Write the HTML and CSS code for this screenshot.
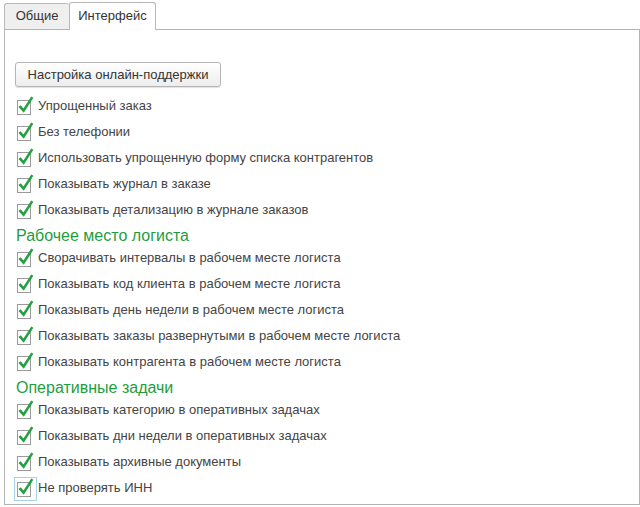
FILE: index.html
```html
<!DOCTYPE html>
<html lang="ru">
<head>
<meta charset="utf-8">
<link rel="stylesheet" href="styles.css">
</head>
<body>
<div class="tabs">
  <div class="tab inactive">Общие</div>
  <div class="tab active">Интерфейс</div>
</div>
<div class="panel">
  <button class="btn">Настройка онлайн-поддержки</button>
  <div class="list">
    <div class="row"><span class="cb"><svg width="18" height="20" viewBox="0 0 18 20"><rect x="1.5" y="4.5" width="13" height="14" fill="#fff" stroke="#9a9a9a"/><path d="M4.3 11 L7.6 14.6 L15.6 2.2" fill="none" stroke="#24a142" stroke-width="2.6" stroke-linecap="square"/></svg></span>Упрощенный заказ</div>
    <div class="row"><span class="cb"><svg width="18" height="20" viewBox="0 0 18 20"><rect x="1.5" y="4.5" width="13" height="14" fill="#fff" stroke="#9a9a9a"/><path d="M4.3 11 L7.6 14.6 L15.6 2.2" fill="none" stroke="#24a142" stroke-width="2.6" stroke-linecap="square"/></svg></span>Без телефонии</div>
    <div class="row"><span class="cb"><svg width="18" height="20" viewBox="0 0 18 20"><rect x="1.5" y="4.5" width="13" height="14" fill="#fff" stroke="#9a9a9a"/><path d="M4.3 11 L7.6 14.6 L15.6 2.2" fill="none" stroke="#24a142" stroke-width="2.6" stroke-linecap="square"/></svg></span>Использовать упрощенную форму списка контрагентов</div>
    <div class="row"><span class="cb"><svg width="18" height="20" viewBox="0 0 18 20"><rect x="1.5" y="4.5" width="13" height="14" fill="#fff" stroke="#9a9a9a"/><path d="M4.3 11 L7.6 14.6 L15.6 2.2" fill="none" stroke="#24a142" stroke-width="2.6" stroke-linecap="square"/></svg></span>Показывать журнал в заказе</div>
    <div class="row"><span class="cb"><svg width="18" height="20" viewBox="0 0 18 20"><rect x="1.5" y="4.5" width="13" height="14" fill="#fff" stroke="#9a9a9a"/><path d="M4.3 11 L7.6 14.6 L15.6 2.2" fill="none" stroke="#24a142" stroke-width="2.6" stroke-linecap="square"/></svg></span>Показывать детализацию в журнале заказов</div>
    <div class="group">Рабочее место логиста</div>
    <div class="row"><span class="cb"><svg width="18" height="20" viewBox="0 0 18 20"><rect x="1.5" y="4.5" width="13" height="14" fill="#fff" stroke="#9a9a9a"/><path d="M4.3 11 L7.6 14.6 L15.6 2.2" fill="none" stroke="#24a142" stroke-width="2.6" stroke-linecap="square"/></svg></span>Сворачивать интервалы в рабочем месте логиста</div>
    <div class="row"><span class="cb"><svg width="18" height="20" viewBox="0 0 18 20"><rect x="1.5" y="4.5" width="13" height="14" fill="#fff" stroke="#9a9a9a"/><path d="M4.3 11 L7.6 14.6 L15.6 2.2" fill="none" stroke="#24a142" stroke-width="2.6" stroke-linecap="square"/></svg></span>Показывать код клиента в рабочем месте логиста</div>
    <div class="row"><span class="cb"><svg width="18" height="20" viewBox="0 0 18 20"><rect x="1.5" y="4.5" width="13" height="14" fill="#fff" stroke="#9a9a9a"/><path d="M4.3 11 L7.6 14.6 L15.6 2.2" fill="none" stroke="#24a142" stroke-width="2.6" stroke-linecap="square"/></svg></span>Показывать день недели в рабочем месте логиста</div>
    <div class="row"><span class="cb"><svg width="18" height="20" viewBox="0 0 18 20"><rect x="1.5" y="4.5" width="13" height="14" fill="#fff" stroke="#9a9a9a"/><path d="M4.3 11 L7.6 14.6 L15.6 2.2" fill="none" stroke="#24a142" stroke-width="2.6" stroke-linecap="square"/></svg></span>Показывать заказы развернутыми в рабочем месте логиста</div>
    <div class="row"><span class="cb"><svg width="18" height="20" viewBox="0 0 18 20"><rect x="1.5" y="4.5" width="13" height="14" fill="#fff" stroke="#9a9a9a"/><path d="M4.3 11 L7.6 14.6 L15.6 2.2" fill="none" stroke="#24a142" stroke-width="2.6" stroke-linecap="square"/></svg></span>Показывать контрагента в рабочем месте логиста</div>
    <div class="group">Оперативные задачи</div>
    <div class="row"><span class="cb"><svg width="18" height="20" viewBox="0 0 18 20"><rect x="1.5" y="4.5" width="13" height="14" fill="#fff" stroke="#9a9a9a"/><path d="M4.3 11 L7.6 14.6 L15.6 2.2" fill="none" stroke="#24a142" stroke-width="2.6" stroke-linecap="square"/></svg></span>Показывать категорию в оперативных задачах</div>
    <div class="row"><span class="cb"><svg width="18" height="20" viewBox="0 0 18 20"><rect x="1.5" y="4.5" width="13" height="14" fill="#fff" stroke="#9a9a9a"/><path d="M4.3 11 L7.6 14.6 L15.6 2.2" fill="none" stroke="#24a142" stroke-width="2.6" stroke-linecap="square"/></svg></span>Показывать дни недели в оперативных задачах</div>
    <div class="row"><span class="cb"><svg width="18" height="20" viewBox="0 0 18 20"><rect x="1.5" y="4.5" width="13" height="14" fill="#fff" stroke="#9a9a9a"/><path d="M4.3 11 L7.6 14.6 L15.6 2.2" fill="none" stroke="#24a142" stroke-width="2.6" stroke-linecap="square"/></svg></span>Показывать архивные документы</div>
    <div class="row"><span class="cb focus"><svg width="18" height="20" viewBox="0 0 18 20"><rect x="1.5" y="4.5" width="13" height="14" fill="#fff" stroke="#9a9a9a"/><path d="M4.3 11 L7.6 14.6 L15.6 2.2" fill="none" stroke="#24a142" stroke-width="2.6" stroke-linecap="square"/></svg></span>Не проверять ИНН</div>
  </div>
</div>
</body>
</html>
```

FILE: styles.css
```css
* { box-sizing: border-box; }
html, body { margin: 0; padding: 0; background: #fff; }
body {
  font-family: "Liberation Sans", Arial, sans-serif;
  font-size: 13px;
  color: #444;
}
.tabs {
  display: flex;
  align-items: flex-end;
  height: 29px;
  padding-left: 4px;
  position: relative;
  z-index: 2;
}
.tab {
  border: 1px solid #b8b8b8;
  border-bottom: none;
  border-radius: 3px 3px 0 0;
  color: #333;
  text-align: center;
}
.tab.inactive {
  width: 65px;
  height: 26px;
  line-height: 24px;
  background: #efefef;
  border-right: none;
}
.tab.active {
  width: 87px;
  height: 28px;
  line-height: 25px;
  background: #fff;
  margin-bottom: -1px;
}
.panel {
  margin-left: 4px;
  width: 636px;
  height: 476px;
  border: 1px solid #b4b4b4;
  padding: 32px 10px 4px 10px;
  position: relative;
  z-index: 1;
}
.btn {
  display: block;
  width: 206px;
  height: 25px;
  border: 1px solid #b5b5b5;
  border-radius: 3px;
  background: linear-gradient(#ffffff, #ededed);
  box-shadow: 0 1px 1px rgba(0,0,0,0.12);
  font-family: inherit;
  font-size: 13px;
  color: #333;
  padding: 0;
  margin: 0;
}
.list { margin-top: 5px; }
.row {
  display: flex;
  align-items: center;
  height: 26px;
  white-space: nowrap;
}
.cb {
  display: block;
  width: 18px;
  height: 20px;
  margin-left: 1px;
  margin-right: 4px;
  margin-top: 1px;
  position: relative;
}
.cb svg { display: block; }
.cb.focus::before {
  content: "";
  position: absolute;
  left: -2px;
  top: -1px;
  width: 21px;
  height: 22px;
  border: 1px solid #a6d2e6;
}
.group {
  height: 22px;
  padding-top: 6px;
  line-height: 16px;
  font-size: 16px;
  color: #1f9d3e;
  padding-left: 1px;
}
```
